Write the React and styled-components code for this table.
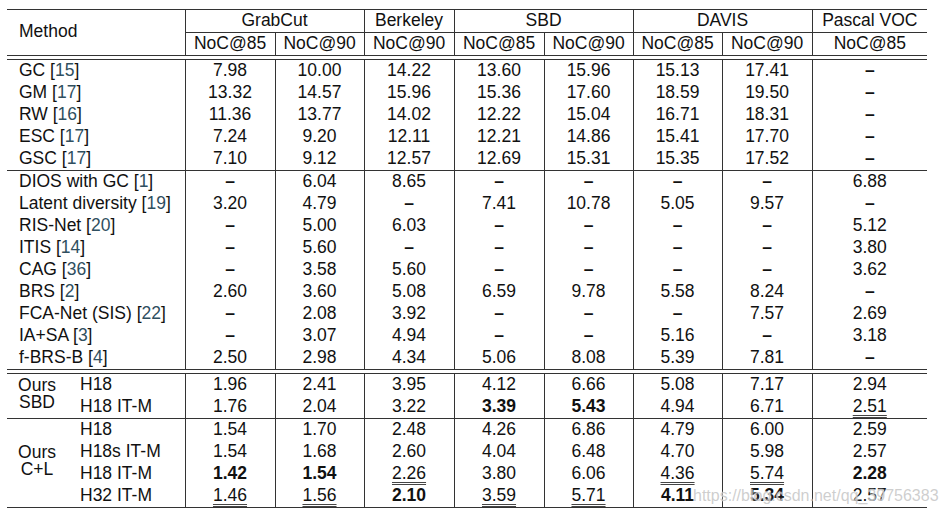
import React from 'react'
import styled, { createGlobalStyle } from 'styled-components'

const GlobalStyle = createGlobalStyle`
  html, body {
    margin: 0;
    padding: 0;
    background: #fff;
  }
`

const classic = [
  { name: 'GC', cite: '15', vals: ['7.98', '10.00', '14.22', '13.60', '15.96', '15.13', '17.41', '-'] },
  { name: 'GM', cite: '17', vals: ['13.32', '14.57', '15.96', '15.36', '17.60', '18.59', '19.50', '-'] },
  { name: 'RW', cite: '16', vals: ['11.36', '13.77', '14.02', '12.22', '15.04', '16.71', '18.31', '-'] },
  { name: 'ESC', cite: '17', vals: ['7.24', '9.20', '12.11', '12.21', '14.86', '15.41', '17.70', '-'] },
  { name: 'GSC', cite: '17', vals: ['7.10', '9.12', '12.57', '12.69', '15.31', '15.35', '17.52', '-'] },
]

const learned = [
  { name: 'DIOS with GC', cite: '1', vals: ['-', '6.04', '8.65', '-', '-', '-', '-', '6.88'] },
  { name: 'Latent diversity', cite: '19', vals: ['3.20', '4.79', '-', '7.41', '10.78', '5.05', '9.57', '-'] },
  { name: 'RIS-Net', cite: '20', vals: ['-', '5.00', '6.03', '-', '-', '-', '-', '5.12'] },
  { name: 'ITIS', cite: '14', vals: ['-', '5.60', '-', '-', '-', '-', '-', '3.80'] },
  { name: 'CAG', cite: '36', vals: ['-', '3.58', '5.60', '-', '-', '-', '-', '3.62'] },
  { name: 'BRS', cite: '2', vals: ['2.60', '3.60', '5.08', '6.59', '9.78', '5.58', '8.24', '-'] },
  { name: 'FCA-Net (SIS)', cite: '22', vals: ['-', '2.08', '3.92', '-', '-', '-', '7.57', '2.69'] },
  { name: 'IA+SA', cite: '3', vals: ['-', '3.07', '4.94', '-', '-', '5.16', '-', '3.18'] },
  { name: 'f-BRS-B', cite: '4', vals: ['2.50', '2.98', '4.34', '5.06', '8.08', '5.39', '7.81', '-'] },
]

// "*" = best (bold), "_" = second best (double underline)
const ours = [
  {
    label: ['Ours', 'SBD'],
    rows: [
      { name: 'H18', vals: ['1.96', '2.41', '3.95', '4.12', '6.66', '5.08', '7.17', '2.94'] },
      { name: 'H18 IT-M', vals: ['1.76', '2.04', '3.22', '*3.39', '*5.43', '4.94', '6.71', '_2.51'] },
    ],
  },
  {
    label: ['Ours', 'C+L'],
    rows: [
      { name: 'H18', vals: ['1.54', '1.70', '2.48', '4.26', '6.86', '4.79', '6.00', '2.59'] },
      { name: 'H18s IT-M', vals: ['1.54', '1.68', '2.60', '4.04', '6.48', '4.70', '5.98', '2.57'] },
      { name: 'H18 IT-M', vals: ['*1.42', '*1.54', '_2.26', '3.80', '6.06', '_4.36', '_5.74', '*2.28'] },
      { name: 'H32 IT-M', vals: ['_1.46', '_1.56', '*2.10', '_3.59', '_5.71', '*4.11', '*5.34', '2.57'] },
    ],
  },
]

const groups = [
  { name: 'GrabCut', cols: ['NoC@85', 'NoC@90'] },
  { name: 'Berkeley', cols: ['NoC@90'] },
  { name: 'SBD', cols: ['NoC@85', 'NoC@90'] },
  { name: 'DAVIS', cols: ['NoC@85', 'NoC@90'] },
  { name: 'Pascal VOC', cols: ['NoC@85'] },
]

// vertical rule after these value columns (0-based)
const lineAfter = [true, true, true, true, true, true, true, false]

const colWidths = [60, 118, 90, 89, 90, 90, 89, 89, 90, 115]

const Value = ({ v }) => {
  if (v === '-') return <Dash>–</Dash>
  if (v[0] === '*') return <Best>{v.slice(1)}</Best>
  if (v[0] === '_') return <Second>{v.slice(1)}</Second>
  return v
}

const Method = ({ name, cite }) => (
  <>
    {name} [<Cite>{cite}</Cite>]
  </>
)

const ValueCells = ({ vals }) =>
  vals.map((v, i) => (
    <Cell key={i} $line={lineAfter[i]}>
      <Value v={v} />
    </Cell>
  ))

export default function App() {
  return (
    <Page>
      <GlobalStyle />
      <Frame>
        <Table>
          <colgroup>
            {colWidths.map((w, i) => (
              <col key={i} style={{ width: w }} />
            ))}
          </colgroup>
          <thead>
            <tr>
              <HeadName colSpan={2} rowSpan={2}>Method</HeadName>
              {groups.map(g => (
                <GroupCell key={g.name} colSpan={g.cols.length} $line={g.name !== 'Pascal VOC'}>
                  {g.name}
                </GroupCell>
              ))}
            </tr>
            <tr>
              {groups.flatMap(g => g.cols).map((c, i) => (
                <SubCell key={i} $line={lineAfter[i]}>{c}</SubCell>
              ))}
            </tr>
            <DoubleRule>
              <td colSpan={10} />
            </DoubleRule>
          </thead>
          <tbody>
            {classic.map(r => (
              <tr key={r.name}>
                <NameCell colSpan={2}>
                  <Method name={r.name} cite={r.cite} />
                </NameCell>
                <ValueCells vals={r.vals} />
              </tr>
            ))}
          </tbody>
          <Group>
            {learned.map(r => (
              <tr key={r.name}>
                <NameCell colSpan={2}>
                  <Method name={r.name} cite={r.cite} />
                </NameCell>
                <ValueCells vals={r.vals} />
              </tr>
            ))}
          </Group>
          <tbody>
            <DoubleRule>
              <td colSpan={10} />
            </DoubleRule>
          </tbody>
          {ours.map((g, gi) => (
            <Group key={gi} $plain={gi === 0}>
              {g.rows.map((r, ri) => (
                <tr key={ri}>
                  {ri === 0 && (
                    <OursCell rowSpan={g.rows.length}>
                      <OursLine>{g.label[0]}</OursLine>
                      <OursLine>{g.label[1]}</OursLine>
                    </OursCell>
                  )}
                  <VariantCell>{r.name}</VariantCell>
                  <ValueCells vals={r.vals} />
                </tr>
              ))}
            </Group>
          ))}
        </Table>
        <Watermark>https://blog.csdn.net/qq_39756383</Watermark>
      </Frame>
    </Page>
  )
}

const Page = styled.div`
  width: 946px;
  height: 519px;
  padding: 9px 0 0 7px;
  box-sizing: border-box;
  font-family: "Liberation Sans", Arial, sans-serif;
  color: #111;
`

const Frame = styled.div`
  position: relative;
  width: 920px;
`

const Table = styled.table`
  width: 920px;
  table-layout: fixed;
  border-collapse: collapse;
  font-size: 17.5px;
  border-top: 1px solid #333;
  border-bottom: 1px solid #333;

  td, th {
    padding: 0 0 2px;
    line-height: 20px;
    font-weight: normal;
    white-space: nowrap;
  }
`

const HeadName = styled.th`
  text-align: left;
  padding: 0 0 4px 12px !important;
  border-right: 1px solid #333;
  vertical-align: middle;
`

const GroupCell = styled.th`
  text-align: center;
  border-bottom: 1px solid #333;
  border-right: ${p => (p.$line ? '1px solid #333' : 'none')};
`

const SubCell = styled.th`
  text-align: center;
  border-right: ${p => (p.$line ? '1px solid #333' : 'none')};
`

const DoubleRule = styled.tr`
  td {
    height: 3px;
    padding: 0 !important;
    line-height: 0 !important;
    border-top: 1px solid #333;
    border-bottom: 1px solid #333;
  }
`

const Group = styled.tbody`
  tr:first-child td {
    border-top: ${p => (p.$plain ? 'none' : '1px solid #333')};
  }
`

const NameCell = styled.td`
  text-align: left;
  padding-left: 12px !important;
  border-right: 1px solid #333;
`

const OursCell = styled.td`
  text-align: center;
  vertical-align: middle;
  padding: 0 0 4px !important;
`

const OursLine = styled.div`
  line-height: 17px;
  height: 17px;
`

const VariantCell = styled.td`
  text-align: left;
  padding-left: 13px !important;
  border-right: 1px solid #333;
`

const Cell = styled.td`
  text-align: center;
  border-right: ${p => (p.$line ? '1px solid #333' : 'none')};
`

const Cite = styled.span`
  color: #2f4f5f;
`

const Dash = styled.span`
  font-weight: bold;
`

const Best = styled.span`
  font-weight: bold;
`

const Second = styled.span`
  text-decoration: underline double #444;
  text-decoration-thickness: 1px;
  text-underline-offset: 3px;
`

const Watermark = styled.div`
  position: absolute;
  left: 686px;
  top: 478px;
  font-size: 16px;
  color: rgba(190, 190, 190, 0.75);
  text-shadow: 0 0 2px #fff;
  pointer-events: none;
`
